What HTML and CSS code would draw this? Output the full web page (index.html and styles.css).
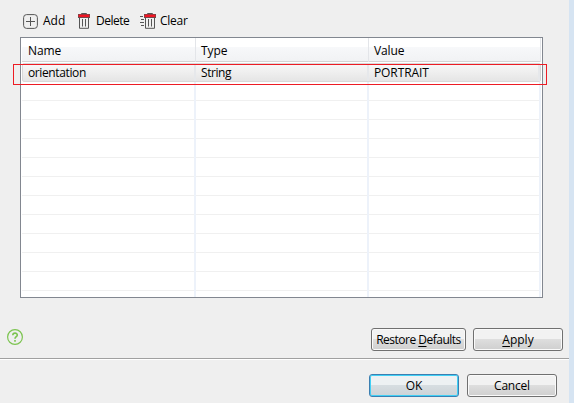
FILE: index.html
```html
<!DOCTYPE html>
<html lang="en">
<head>
<meta charset="utf-8">
<title>Preferences</title>
<link rel="stylesheet" href="styles.css">
</head>
<body>
<main class="dialog">
  <div class="toolbar">
    <div class="tool tool-add">
      <svg width="15" height="15" viewBox="0 0 15 15"><rect x=".6" y=".6" width="13.8" height="13.8" rx="3" fill="none" stroke="#555"/><path d="M3 7.5h9M7.5 3v9" stroke="#555"/></svg>
      <span>Add</span>
    </div>
    <div class="tool tool-delete">
      <svg width="12" height="16" viewBox="0 0 12 16"><path d="M3.5 1.5V.5h5v1" fill="none" stroke="#555"/><path d="M0 1h12v4H0z" fill="#555"/><path d="M.5 1.5h11v2.7H.5z" fill="#f01523"/><path d="M1.5 5v10.3h9V5M4.5 6v7.5M7.5 6v7.5" fill="none" stroke="#555"/></svg>
      <span>Delete</span>
    </div>
    <div class="tool tool-clear">
      <svg width="16" height="16" viewBox="0 0 16 16"><path d="M0 3.5h3M1 6.5h3M0 9.5h4M1 12.5h3" stroke="#555"/><path d="M7.5 1.5V.5h5v1" fill="none" stroke="#555"/><path d="M4 1h12v4H4z" fill="#555"/><path d="M4.5 1.5h11v2.7h-11z" fill="#f01523"/><path d="M5.5 5v10.3h9V5M8.5 6v7.5M11.5 6v7.5" fill="none" stroke="#555"/></svg>
      <span>Clear</span>
    </div>
  </div>

  <div class="table">
    <div class="row head"><span class="name">Name</span><span class="type">Type</span><span class="value">Value</span></div>
    <div class="row selected"><span class="orientation">orientation</span><span class="string">String</span><span class="portrait">PORTRAIT</span></div>
    <div class="row"><span></span><span></span><span></span></div>
    <div class="row"><span></span><span></span><span></span></div>
    <div class="row"><span></span><span></span><span></span></div>
    <div class="row"><span></span><span></span><span></span></div>
    <div class="row"><span></span><span></span><span></span></div>
    <div class="row"><span></span><span></span><span></span></div>
    <div class="row"><span></span><span></span><span></span></div>
    <div class="row"><span></span><span></span><span></span></div>
    <div class="row"><span></span><span></span><span></span></div>
    <div class="row"><span></span><span></span><span></span></div>
    <div class="row"><span></span><span></span><span></span></div>
    <div class="row last"><span></span><span></span><span></span></div>
    <div class="highlight"></div>
  </div>

  <div class="actions">
    <svg class="help" width="16" height="16" viewBox="0 0 16 16"><circle cx="8" cy="8" r="7.4" fill="none" stroke="#7cc450" stroke-width="1.2"/><path d="M5.8 6.3C5.8 3.4 10.3 3.4 10.3 6.1C10.3 7.8 8 7.7 8 9.8M8 11v1.7" fill="none" stroke="#7cc450" stroke-width="1.6"/></svg>
    <button class="restore">Restore <u>D</u>efaults</button>
    <button class="apply"><u>A</u>pply</button>
  </div>
  <div class="footer">
    <button class="ok">OK</button>
    <button class="cancel">Cancel</button>
  </div>
</main>
</body>
</html>
```
FILE: styles.css
```css
* { box-sizing: border-box; }
body {
  margin: 0;
  height: 403px;
  overflow: hidden;
  background: #d6e4f2;
  color: #000;
  font: 12px/16px "Open Sans", "Noto Sans", sans-serif;
}
.dialog { width: 569px; height: 403px; background: #efefef; }

.toolbar { display: flex; height: 37px; padding: 13px 0 0 23px; }
.tool { display: flex; height: 16px; white-space: nowrap; }
.tool svg { flex: none; margin-right: 5px; }
.tool-add { width: 55px; }
.tool-add svg { margin-top: 1px; }
.tool-delete { width: 62px; letter-spacing: -.5px; }
.tool-delete svg { margin-right: 6px; }
.tool-clear { letter-spacing: -.25px; }
.tool-clear svg { margin-right: 4px; }

.table {
  position: relative;
  width: 523px;
  height: 261px;
  margin-left: 20px;
  padding: 0 1px;
  border: 1px solid #828790;
  background: #fff;
}
.row { display: grid; grid-template-columns: 174px 173px 173px; height: 19px; border-bottom: 1px solid #f0f0f0; }
.row span {
  padding-left: 5px;
  margin-bottom: -1px;
  border-right: 2px solid #edf2fa;
  white-space: nowrap;
}
.row span:first-child { padding-left: 6px; }
.row span:last-child { margin-right: 1px; }
.head { height: 24px; border-bottom-color: #d5d5d5; background: linear-gradient(#fff 0 40%, #f7f8fa 41%, #f1f2f4); }
.head span { padding-top: 5px; border-right: 1px solid #e3e5e9; letter-spacing: -.1px; }
.row.selected {
  height: 19px;
  margin: 1px 0 0;
  grid-template-columns: 173px 173px 172px;
  border: 1px solid #d9d9d9;
  border-radius: 2px;
  background: linear-gradient(#f8f8f8, #e5e5e5);
}
.selected span { height: 17px; padding-top: 1px; margin-bottom: 0; border-right-color: #e6e8eb; }
.row.selected span:first-child { padding-left: 5px; }
.orientation { letter-spacing: -.38px; }
.string { letter-spacing: -.45px; }
.portrait { letter-spacing: -.1px; }
.row.last { height: 6px; border-bottom: 0; }
.last span { margin-bottom: 0; }
.highlight { position: absolute; left: -8px; top: 26px; width: 534px; height: 21px; border: 1px solid #ed1c24; }

.actions {
  display: flex;
  height: 61px;
  padding: 30px 6px 0 7px;
  border-bottom: 1px solid #a0a0a0;
}
.help { margin: 1px auto 0 0; }
button {
  height: 23px;
  width: 90px;
  padding: 0;
  border: 1px solid #707070;
  border-radius: 3px;
  background: linear-gradient(#f2f2f2 0 49%, #dedede 50%, #cfcfcf);
  box-shadow: inset 0 0 0 1px #fafafa;
  color: #000;
  font: inherit;
  white-space: nowrap;
}
.restore { width: 95px; margin-right: 7px; letter-spacing: -.5px; }
.cancel { letter-spacing: -.2px; }
u { text-underline-offset: 2px; }
.footer { display: flex; gap: 8px; height: 44px; padding: 14px 0 0 369px; border-top: 1px solid #fff; }
.ok {
  border-color: #3c7fb1;
  box-shadow: inset 0 0 0 1px #41d0f5;
  background: linear-gradient(#edf1f3 0 49%, #d6dde1 50%, #cdd3d7);
}
```
